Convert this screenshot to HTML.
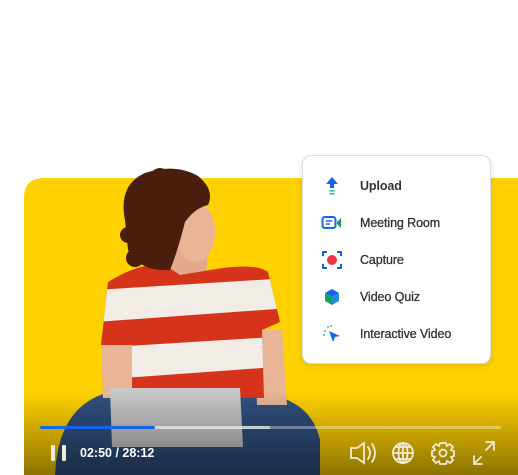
<!DOCTYPE html>
<html><head><style>
body{margin:0;width:518px;height:475px;overflow:hidden;background:#fff;font-family:"Liberation Sans",sans-serif;position:relative}
.menu{position:absolute;left:302px;top:155px;width:187px;height:207px;background:#fff;border:1px solid #ddd;border-radius:9px;box-shadow:0 2px 6px rgba(0,0,0,.12)}
.it{position:absolute;left:57px;font-size:12.5px;color:#333;font-weight:normal;-webkit-text-stroke:0.3px #333;letter-spacing:-0.1px}
.ic{position:absolute;left:18px;width:22px;height:22px}
.time{position:absolute;left:80px;top:446px;color:#fff;font-size:12.5px;font-weight:bold}
</style></head><body>
<svg width="518" height="475" style="position:absolute;left:0;top:0">
<defs><linearGradient id="g" x1="0" y1="0" x2="0" y2="1"><stop offset="0.72" stop-color="#000" stop-opacity="0"/><stop offset="1" stop-color="#000" stop-opacity="0.45"/></linearGradient>
<clipPath id="sh"><path d="M108 282Q140 262 165 265L180 275L210 270Q255 262 268 272L280 322L262 330L264 398L132 398L132 345L101 345Z"/></clipPath></defs>
<path d="M24 475V198Q24 178 44 178H518V475Z" fill="#FFD100"/>
<path d="M55 475Q58 405 110 392L250 392Q310 395 320 440L320 475Z" fill="#30507e"/>
<path d="M101 335L130 335L135 398L103 398Z" fill="#e8b596"/>
<path d="M254 330L282 330L287 405L257 405Z" fill="#e8b596"/>
<path d="M160 240Q165 275 180 280L205 275Q210 255 205 240Z" fill="#e2a98b"/>
<ellipse cx="195" cy="232" rx="20" ry="30" fill="#eab596"/>
<g clip-path="url(#sh)">
<rect x="95" y="255" width="195" height="150" fill="#d5341a"/>
<path d="M95 290L290 278L290 308L95 322Z" fill="#f1ede6"/>
<path d="M95 348L290 336L290 366L95 380Z" fill="#f1ede6"/>
</g>
<path d="M125 220Q118 185 145 173Q175 163 198 176Q215 190 208 205Q195 208 185 222Q178 250 170 270Q140 272 128 250Z" fill="#4a1e0c"/>
<circle cx="128" cy="235" r="8" fill="#4a1e0c"/><circle cx="135" cy="258" r="9" fill="#4a1e0c"/><circle cx="160" cy="178" r="10" fill="#4a1e0c"/>
<path d="M110 388L240 388L243 447L112 447Z" fill="#c8c8c8"/>
<rect x="24" y="178" width="494" height="297" fill="url(#g)"/>
<rect x="40" y="426" width="461" height="3" rx="1.5" fill="#fff" opacity="0.35"/>
<rect x="40" y="426" width="230" height="3" rx="1.5" fill="#ddd" opacity="0.8"/>
<rect x="40" y="426" width="115" height="3" rx="1.5" fill="#1565e8"/>
<rect x="51" y="445" width="4" height="16" rx="1" fill="#f3ead6"/>
<rect x="62" y="445" width="4" height="16" rx="1" fill="#f3ead6"/>
<g stroke="#f3ead6" stroke-width="1.8" fill="none" stroke-linecap="round">
<path d="M351 448H357L364 443V463L357 458H351Z"/>
<path d="M368 447Q372 453 368 459"/><path d="M372 444Q378 453 372 462"/>
<circle cx="403" cy="453" r="10"/><ellipse cx="403" cy="453" rx="4.5" ry="10"/><path d="M393 453H413M395 447H411M395 459H411M403 443V463"/>
<circle cx="443" cy="453" r="3.5"/>
<path d="M440 443H446L447 446L450 444L453 447L451 450L454 451V456L451 457L453 460L450 463L447 461L446 464H440L439 461L436 463L433 460L435 457L432 456V451L435 450L433 447L436 444L439 446Z"/>
<path d="M486 442H494V450M494 442L486 450M474 456V464H482M474 464L481 457"/>
</g>
</svg>
<div class="time">02:50 / 28:12</div>
<div class="menu">
 <svg class="ic" style="top:19px" viewBox="0 0 22 22"><path d="M11 2L17 9H13V13H9V9H5Z" fill="#1565e8"/><rect x="8.5" y="15" width="5" height="1.6" fill="#2ec4a0"/><rect x="8.5" y="18" width="5" height="1.6" fill="#2ec4a0"/></svg>
 <div class="it" style="top:23px;font-weight:bold;-webkit-text-stroke:0">Upload</div>
 <svg class="ic" style="top:56px" viewBox="0 0 22 22"><rect x="1.5" y="5" width="13" height="11" rx="2.5" fill="none" stroke="#1565e8" stroke-width="2"/><path d="M5 9H11M5 12H9" stroke="#1565e8" stroke-width="1.6"/><path d="M16 10L20 6V16L16 12Z" fill="#13a05a"/></svg>
 <div class="it" style="top:60px">Meeting Room</div>
 <svg class="ic" style="top:93px" viewBox="0 0 22 22"><g stroke="#1565e8" stroke-width="2" fill="none"><path d="M2 7V3H6M16 3H20V7M20 15V19H16M6 19H2V15"/></g><circle cx="11" cy="11" r="5" fill="#ef3247"/></svg>
 <div class="it" style="top:97px">Capture</div>
 <svg class="ic" style="top:130px" viewBox="0 0 22 22"><path d="M11 3L18 7L11 11L4 7Z" fill="#1565e8"/><path d="M4 7L11 11V19L4 15Z" fill="#13a05a"/><path d="M18 7L11 11V19L18 15Z" fill="#1e8fd8"/></svg>
 <div class="it" style="top:134px">Video Quiz</div>
 <svg class="ic" style="top:167px" viewBox="0 0 22 22"><path d="M8 8L19 13L14 14L12 19Z" fill="#1565e8"/><circle cx="4" cy="8" r="1" fill="#2ec4a0"/><circle cx="7" cy="4" r="1" fill="#2ec4a0"/><circle cx="3" cy="12" r="1" fill="#2ec4a0"/><circle cx="10" cy="3" r="1" fill="#2ec4a0"/></svg>
 <div class="it" style="top:171px">Interactive Video</div>
</div>
</body></html>
